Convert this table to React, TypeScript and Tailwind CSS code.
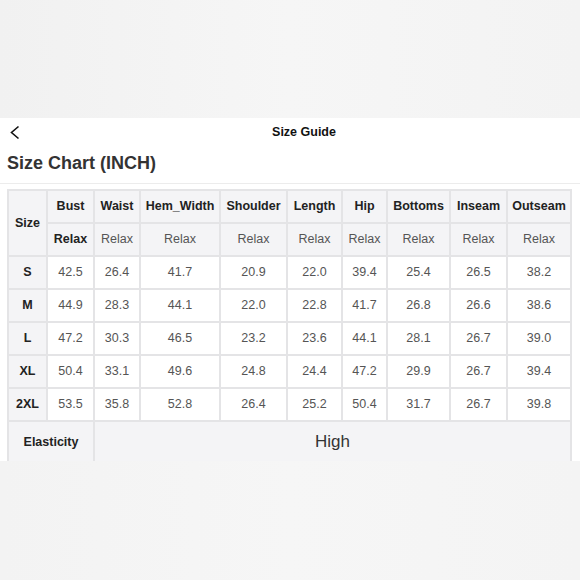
import React from "react"

type Row = {
  size: string
  values: string[]
}

const columns = [
  "Bust",
  "Waist",
  "Hem_Width",
  "Shoulder",
  "Length",
  "Hip",
  "Bottoms",
  "Inseam",
  "Outseam",
]

const widths = ["w-[39px]", "w-[47px]", "w-[46px]", "w-[80px]", "w-[67px]", "w-[55px]", "w-[45px]", "w-[63px]", "w-[57px]", "w-[64px]"]

const rows: Row[] = [
  { size: "S", values: ["42.5", "26.4", "41.7", "20.9", "22.0", "39.4", "25.4", "26.5", "38.2"] },
  { size: "M", values: ["44.9", "28.3", "44.1", "22.0", "22.8", "41.7", "26.8", "26.6", "38.6"] },
  { size: "L", values: ["47.2", "30.3", "46.5", "23.2", "23.6", "44.1", "28.1", "26.7", "39.0"] },
  { size: "XL", values: ["50.4", "33.1", "49.6", "24.8", "24.4", "47.2", "29.9", "26.7", "39.4"] },
  { size: "2XL", values: ["53.5", "35.8", "52.8", "26.4", "25.2", "50.4", "31.7", "26.7", "39.8"] },
]

const cell = "border-2 border-[#e4e4e6] text-center align-middle p-0"

const App: React.FC = () => {
  return (
    <div className="flex h-[580px] w-[580px] flex-col bg-[#f4f4f4] font-['Liberation_Sans',Arial,sans-serif]">
      <div className="h-[118px] bg-gradient-to-r from-[#f1f1f1] via-[#f6f6f6] to-[#f3f3f3]" />
      <div className="h-[343px] overflow-hidden bg-white">
        {/* header bar */}
        <div className="relative flex h-[29px] items-center justify-center">
          <svg
            className="absolute left-[9px] top-[7px]"
            width="12"
            height="15"
            viewBox="0 0 12 15"
            fill="none"
          >
            <path d="M9.5 1.5L2.5 7.5L9.5 13.5" stroke="#111" strokeWidth="1.6" />
          </svg>
          <span className="ml-[28px] text-[12.5px] font-bold text-[#111]">Size Guide</span>
        </div>
        <div className="px-[7px] pt-[3px] pb-[6px] text-[18px] font-bold text-[#333]">
          Size Chart (INCH)
        </div>
        <div className="h-px bg-[#ececec]" />
        <div className="pl-[7px] pt-[5px]">
          <table className="w-[563px] table-fixed border-collapse text-[12.5px]">
            <colgroup>
              {widths.map((w, i) => (
                <col key={i} className={w} />
              ))}
            </colgroup>
            <tbody>
              <tr className="h-[33px] bg-[#f4f4f6]">
                <td rowSpan={2} className={`${cell} font-bold text-[#222]`}>
                  Size
                </td>
                {columns.map((c) => (
                  <td key={c} className={`${cell} font-bold text-[#222]`}>
                    {c}
                  </td>
                ))}
              </tr>
              <tr className="h-[33px] bg-[#f4f4f6]">
                {columns.map((c, i) => (
                  <td
                    key={c}
                    className={`${cell} ${i === 0 ? "font-bold text-[#222]" : "text-[#555]"}`}
                  >
                    Relax
                  </td>
                ))}
              </tr>
              {rows.map((row) => (
                <tr key={row.size} className="h-[33px]">
                  <td className={`${cell} bg-[#f4f4f6] font-bold text-[#222]`}>{row.size}</td>
                  {row.values.map((v, i) => (
                    <td key={i} className={`${cell} bg-white text-[#555]`}>
                      {v}
                    </td>
                  ))}
                </tr>
              ))}
              <tr className="h-[44px] bg-[#f4f4f6]">
                <td colSpan={2} className={`${cell} pb-[2px] font-bold text-[#222]`}>
                  Elasticity
                </td>
                <td colSpan={8} className={`${cell} pb-[2px] text-[17px] text-[#333]`}>
                  High
                </td>
              </tr>
            </tbody>
          </table>
        </div>
      </div>
      <div className="flex-1 bg-gradient-to-r from-[#f3f3f3] via-[#f6f6f6] to-[#f4f4f4]" />
    </div>
  )
}

export default App
